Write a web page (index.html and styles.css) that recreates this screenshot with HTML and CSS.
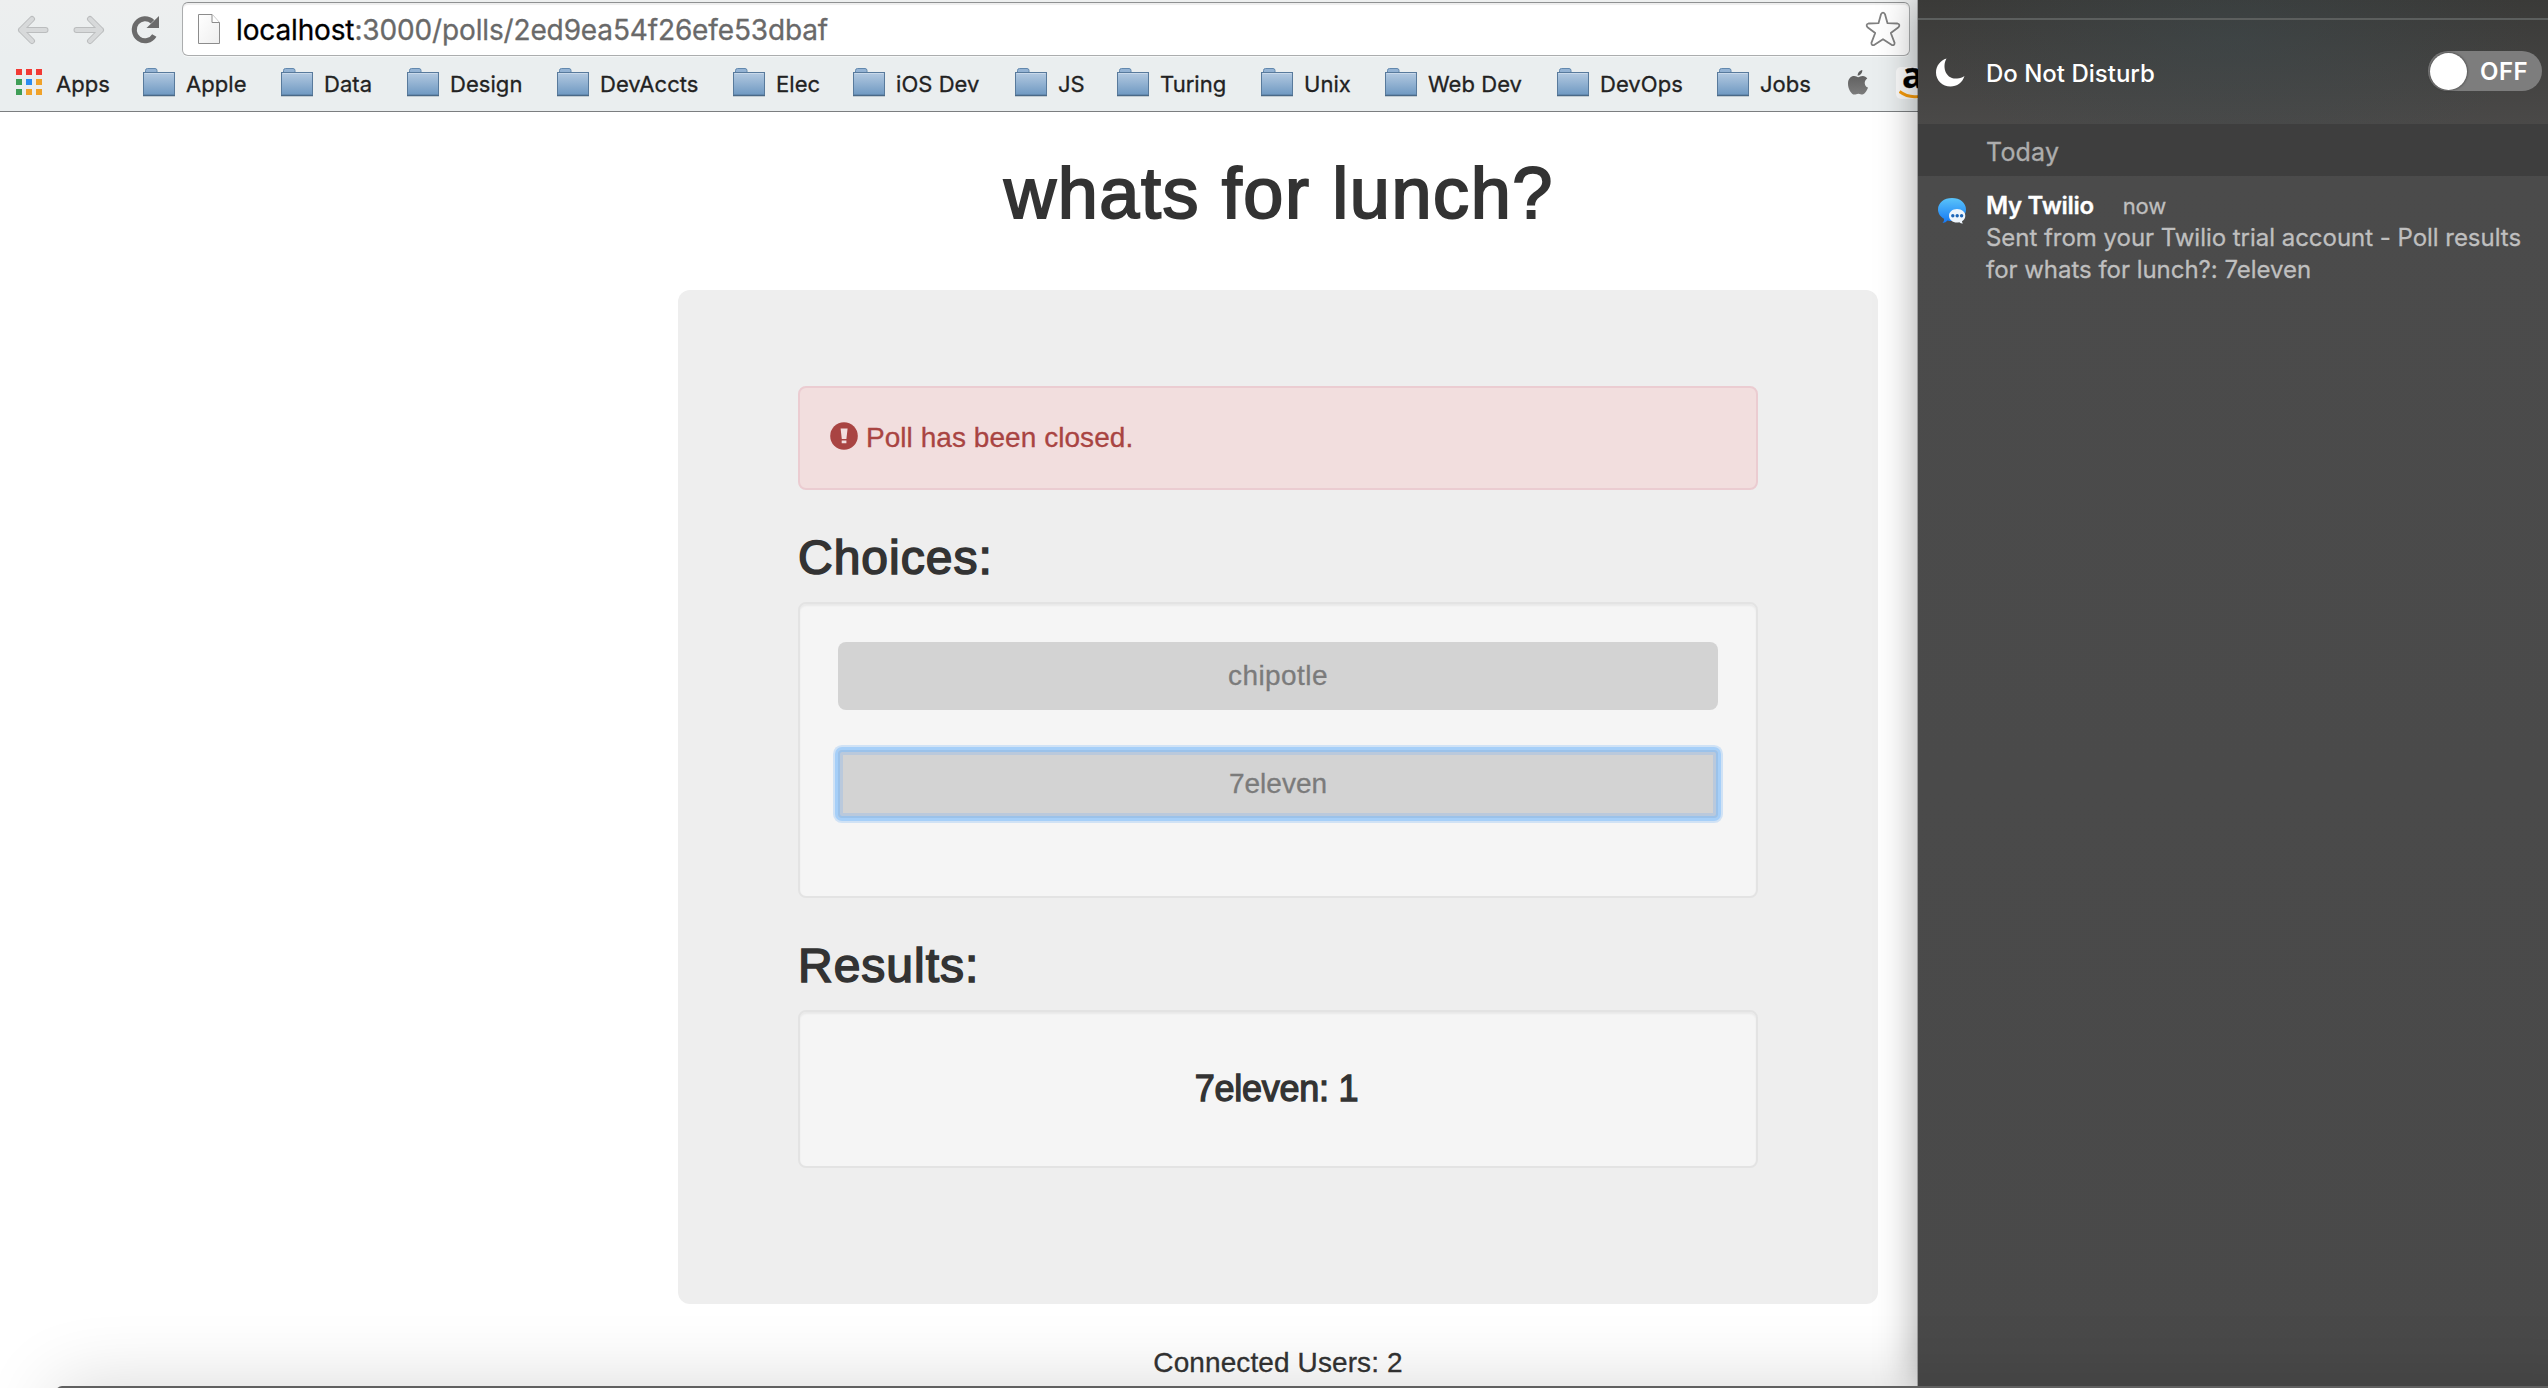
FILE: index.html
```
<!DOCTYPE html>
<html lang="en">
<head>
<meta charset="utf-8">
<title>whats for lunch?</title>
<link rel="stylesheet" href="styles.css">
</head>
<body>
<svg class="defs" width="0" height="0">
  <defs>
    <linearGradient id="folderFill" x1="0" y1="0" x2="0" y2="1"><stop offset="0" stop-color="#b4cae1"/><stop offset="1" stop-color="#6f99c2"/></linearGradient>
    <linearGradient id="pageFill" x1="0" y1="0" x2="1" y2="1"><stop offset="0" stop-color="#fff"/><stop offset="1" stop-color="#eee"/></linearGradient>
    <linearGradient id="bubbleFill" x1="0" y1="0" x2="0" y2="1"><stop offset="0" stop-color="#5ac4fa"/><stop offset="1" stop-color="#1478f5"/></linearGradient>
    <linearGradient id="appleFill" x1="0" y1="0" x2="0" y2="1"><stop offset="0" stop-color="#585858"/><stop offset="1" stop-color="#7c7c7c"/></linearGradient>
    <symbol id="folder" viewBox="0 0 32 29">
      <path d="M2.500 6V2.500Q2.500.5 4.500.5H12Q14 .5 14 2.500V6Z" fill="#94b3d4" stroke="#6288ae"/>
      <rect x=".5" y="4.500" width="31" height="22.500" fill="url(#folderFill)" stroke="#587a9c"/>
      <path d="M1.500 5.500H30.500" stroke="#c9d9ea"/>
      <path d="M0 27.500H32" stroke="#4a6987" stroke-width="1"/>
      <path d="M0 28.500H32" stroke="#c2cbd1"/>
    </symbol>
  </defs>
</svg>
<div class="screen">
  <div class="browser">
    <div class="toolbar">
      <svg class="nav" width="32" height="30" viewBox="0 0 32 30"><path d="M15 4 4 15 15 26M4 15H28.500" fill="none" stroke="#bbbdbe" stroke-width="6" stroke-linecap="round" stroke-linejoin="round"/><path d="M15 4 4 15 15 26M4 15H28.500" fill="none" stroke="#d7d9da" stroke-width="4" stroke-linecap="round" stroke-linejoin="round"/></svg>
      <svg class="nav forward" width="32" height="30" viewBox="0 0 32 30"><path d="M17 4 28 15 17 26M28 15H3.500" fill="none" stroke="#bbbdbe" stroke-width="6" stroke-linecap="round" stroke-linejoin="round"/><path d="M17 4 28 15 17 26M28 15H3.500" fill="none" stroke="#d7d9da" stroke-width="4" stroke-linecap="round" stroke-linejoin="round"/></svg>
      <svg class="nav reload" width="30" height="30" viewBox="0 0 30 30"><path d="M23.300 20.500A10.800 11 0 1 1 21.500 6.800" fill="none" stroke="#6b6b6b" stroke-width="5"/><path d="M28 1V13H15.500Z" fill="#6b6b6b"/></svg>
      <div class="address">
        <svg width="24" height="32" viewBox="0 0 24 32"><path d="M1.500 1.500H15L22.500 9.500V30.500H1.500Z" fill="url(#pageFill)" stroke="#8c8c8c"/><path d="M15 1.500V9.500H22.500" fill="#fff" stroke="#8c8c8c"/></svg>
        <span class="url"><b>localhost</b>:3000/polls/2ed9ea54f26efe53dbaf</span>
        <svg class="star" width="36" height="36" viewBox="0 0 36 36"><path d="M16 3.200Q18 .2 20 3.200L22.500 12.200 32.500 12.500Q35.600 13.500 33.500 16.200L25.800 22 29.600 31.800Q29.600 35 26.500 33.800L18 28.200 9.500 33.800Q6.400 35 6.400 31.800L10.200 22 2.500 16.200Q.4 13.500 3.500 12.500L13.500 12.200Z" fill="#fff" stroke="#808080" stroke-width="1.800" stroke-linejoin="round"/></svg>
      </div>
    </div>
    <nav class="bookmarks">
      <svg class="apps" width="26" height="26" viewBox="0 0 26 26"><path fill="#f23a34" d="M0 0h6v6H0zM10 0h6v6h-6zM20 0h6v6h-6z"/><path fill="#3f9e57" d="M0 10h6v6H0zM0 20h6v6H0z"/><path fill="#2a8cf0" d="M10 10h6v6h-6z"/><path fill="#f0a22a" d="M20 10h6v6h-6zM10 20h6v6h-6zM20 20h6v6h-6z"/></svg>
      <span>Apps</span>
      <svg class="folder"><use href="#folder"/></svg><span>Apple</span>
      <svg class="folder"><use href="#folder"/></svg><span>Data</span>
      <svg class="folder"><use href="#folder"/></svg><span>Design</span>
      <svg class="folder"><use href="#folder"/></svg><span>DevAccts</span>
      <svg class="folder"><use href="#folder"/></svg><span>Elec</span>
      <svg class="folder"><use href="#folder"/></svg><span>iOS Dev</span>
      <svg class="folder"><use href="#folder"/></svg><span>JS</span>
      <svg class="folder"><use href="#folder"/></svg><span>Turing</span>
      <svg class="folder"><use href="#folder"/></svg><span>Unix</span>
      <svg class="folder"><use href="#folder"/></svg><span>Web Dev</span>
      <svg class="folder"><use href="#folder"/></svg><span>DevOps</span>
      <svg class="folder"><use href="#folder"/></svg><span>Jobs</span>
      <svg class="apple" width="20" height="25" viewBox="0 0 20 25"><path fill="url(#appleFill)" d="M14.300 0C14.500 3.200 12 5.700 9.700 5.700 9.400 3 11.800.4 14.300 0ZM10.200 7.200C11.300 7.200 12.600 6 14.800 6 16.600 6 18.300 6.900 19.300 8.400 15.500 10.600 16.100 16 20 17.600 19 20.500 16.700 24.600 14.400 24.600 12.900 24.600 12.300 23.700 10.400 23.700 8.500 23.700 7.800 24.600 6.400 24.600 3.500 24.600 0 19 0 13.700 0 8.700 3 6.100 6.100 6.100 8 6.100 9.300 7.200 10.200 7.200Z"/></svg>
      <div class="amazon"><span>a</span><svg width="36" height="9" viewBox="0 0 36 9"><path d="M.5 1.500Q13 11 30 3" fill="none" stroke="#f79b0b" stroke-width="3"/></svg></div>
    </nav>
    <main class="page">
      <h1>whats for lunch?</h1>
      <section class="jumbotron">
        <div class="alert">
          <svg width="28" height="28" viewBox="0 0 28 28"><circle cx="14" cy="14" r="13.800" fill="#a94442"/><path d="M10.600 6.500h7l-1.200 10.500h-4.600zM11.700 18.500h4.700v2.800h-4.700z" fill="#f2dede"/></svg>
          <span>Poll has been closed.</span>
        </div>
        <h2>Choices:</h2>
        <div class="well choices">
          <button class="choice" disabled>chipotle</button>
          <button class="choice focused" disabled>7eleven</button>
        </div>
        <h2>Results:</h2>
        <div class="well results">7eleven: 1</div>
      </section>
      <p class="connected">Connected Users: 2</p>
    </main>
  </div>
  <aside class="panel">
    <div class="top-rule"></div>
    <div class="dnd">
      <svg class="moon" width="29" height="29" viewBox="0 0 29 29"><path d="M10.500.5C6 8 9 21.500 21 20.500 24 20.300 26.500 19.500 28.500 18 26.500 24.500 21 28.500 14.500 28.500 6.500 28.500 0 22.500 0 14.500 0 8 4.500 2 10.500.5Z" fill="#fff"/></svg>
      <span class="dnd-label">Do Not Disturb</span>
      <div class="toggle"><i></i><span>OFF</span></div>
    </div>
    <div class="today">Today</div>
    <article class="note">
      <svg width="32" height="30" viewBox="0 0 32 30"><path d="M15 1C23 1 29 5.800 29 12.500S23 24 15 24Q12.500 24 10.500 23.400 9 25.500 5.500 26 7.500 24 7 21.800C3.500 19.800 1 16.500 1 12.500 1 5.800 7 1 15 1Z" fill="url(#bubbleFill)"/><path d="M20 12C25 12 28.300 15 28.300 18.700 28.300 21 27 23 25 24.200Q25 25.700 26 26.600 23.500 26.500 22.300 25.300 21 25.500 20 25.500C15.500 25.500 12 22.500 12 18.700S15.500 12 20 12Z" fill="#eef5fc"/><g fill="#1d66b8"><circle cx="15.800" cy="18.800" r="1.700"/><circle cx="20.200" cy="18.800" r="1.700"/><circle cx="24.600" cy="18.800" r="1.700"/></g></svg>
      <div class="note-text">
        <div class="note-head"><strong>My Twilio</strong><time>now</time></div>
        <p>Sent from your Twilio trial account - Poll results<br>for whats for lunch?: 7eleven</p>
      </div>
    </article>
  </aside>
  <div class="dock"></div>
</div>
</body>
</html>
```
FILE: styles.css
```
* { box-sizing: border-box; }
body { margin: 0; overflow: hidden; }
h1, h2, p { margin: 0; font-weight: 400; }
svg { display: block; flex: none; }
.defs { position: absolute; }

.screen {
  position: relative;
  display: flex;
  width: 2548px;
  height: 1388px;
  overflow: hidden;
  background: #fff;
}
.browser {
  width: 1918px;
  flex: none;
  overflow: hidden;
  font-family: "Liberation Sans", Arial, sans-serif;
  color: #333;
}

.toolbar {
  display: flex;
  height: 58px;
  padding: 2px 8px 2px 17px;
  background: linear-gradient(#edefef, #eaeeef);
}
.nav { margin-top: 13px; }
.forward { margin-left: 24px; }
.reload { margin-left: 26px; }
.address {
  display: flex;
  align-items: center;
  flex: 1;
  margin-left: 21px;
  padding: 0 8px 0 14px;
  border: 1px solid #abadae;
  border-top-color: #8f9192;
  border-radius: 6px;
  background: #fff;
  box-shadow: inset 0 2px 1px #eee, 0 1px 0 #f6f8f8;
}
.url {
  flex: 1;
  margin: 2px 0 0 15px;
  font: 28px/40px Inter, sans-serif;
  letter-spacing: -0.14px;
  -webkit-text-stroke: 0.3px;
  color: #696969;
}
.url b { font-weight: 400; color: #000; }

.bookmarks {
  display: grid;
  grid-template-columns:
    40px 87px 43px 95px 43px 83px 43px 107px 43px 133px 43px 77px 43px 119px
    43px 59px 43px 101px 43px 81px 43px 129px 43px 117px 43px 88px 48px 60px;
  align-items: center;
  height: 54px;
  padding-left: 16px;
  border-bottom: 1px solid #7b7e80;
  background: #eaeeef;
  font: 22px/28px Inter, sans-serif;
  letter-spacing: 0.05px;
  -webkit-text-stroke: 0.3px #222;
  color: #222;
}
.bookmarks > span { white-space: nowrap; margin-bottom: 1px; }
.bookmarks > .apps { margin-bottom: 5px; }
.folder { width: 32px; height: 29px; margin-bottom: 4px; }
.apple { margin-bottom: 4px; }
.amazon {
  width: 36px;
  height: 32px;
  margin-bottom: 4px;
  padding-left: 3px;
  border-radius: 5px;
  background: #fbfbfb;
}
.amazon span {
  display: block;
  height: 23px;
  padding-left: 3px;
  font: 700 35px/16px "Open Sans", sans-serif;
  color: #000;
}

.page { padding: 41px 38px 0 678px; }
h1 {
  margin-bottom: 57px;
  font-size: 72px;
  line-height: 80px;
  letter-spacing: 1.6px;
  text-align: center;
  -webkit-text-stroke: 2px #333;
}
.jumbotron {
  width: 1200px;
  height: 1014px;
  padding: 96px 120px;
  border-radius: 12px;
  background: #eee;
}
.alert {
  display: flex;
  align-items: center;
  gap: 8px;
  height: 104px;
  padding-left: 30px;
  border: 2px solid #ebccd1;
  border-radius: 8px;
  background: #f2dede;
  font-size: 28px;
  line-height: 40px;
  letter-spacing: 0.05px;
  -webkit-text-stroke: 0.3px;
  color: #a94442;
}
.alert svg { margin-bottom: 4px; }
h2 {
  margin: 40px 0 16px;
  font-size: 48px;
  line-height: 56px;
  letter-spacing: 1px;
  -webkit-text-stroke: 1.6px #333;
}
.well {
  border: 2px solid #e3e3e3;
  border-radius: 8px;
  background: #f5f5f5;
  box-shadow: inset 0 2px 2px rgba(0, 0, 0, 0.05);
}
.choices {
  display: flex;
  flex-direction: column;
  gap: 40px;
  height: 296px;
  padding: 38px;
}
.choice {
  height: 68px;
  padding: 0;
  border: 0;
  border-radius: 8px;
  background: #d3d3d3;
  font: 28px/68px "Liberation Sans", Arial, sans-serif;
  letter-spacing: 0.45px;
  -webkit-text-stroke: 0.3px;
  color: #7b7b7b;
}
.focused {
  letter-spacing: 0;
  border-radius: 4px;
  box-shadow:
    inset 0 0 0 2px #9bc2ea,
    inset 0 0 0 5px #bac9dc,
    0 0 0 3px #a6cff8,
    0 0 0 5px #d0e2f5;
}
.results {
  height: 158px;
  padding-right: 3px;
  font-size: 36px;
  line-height: 154px;
  letter-spacing: -0.25px;
  text-align: center;
  -webkit-text-stroke: 1.3px #333;
}
.connected {
  width: 1200px;
  margin-top: 39px;
  font-size: 28px;
  line-height: 40px;
  letter-spacing: 0.1px;
  text-align: center;
  -webkit-text-stroke: 0.3px;
}

.panel {
  position: relative;
  flex: 1;
  background:
    radial-gradient(ellipse 300px 130px at 50% 40px, rgba(60, 75, 80, 0.4), transparent),
    linear-gradient(#3a3a38, #4a4948 124px, #4b4b4b 180px, #494949);
  box-shadow: -1px 0 0 rgba(0, 0, 0, 0.25), 0 0 38px rgba(0, 0, 0, 0.38);
  font-family: Inter, sans-serif;
  color: #fff;
}
.top-rule { height: 20px; border-bottom: 2px solid #5c5f5e; }
.dnd {
  display: flex;
  align-items: center;
  height: 104px;
  padding: 0 6px 0 18px;
}
.dnd-label {
  flex: 1;
  margin: 3px 0 0 21px;
  font-size: 24px;
  font-weight: 500;
}
.toggle {
  display: flex;
  align-items: center;
  width: 114px;
  height: 40px;
  margin-bottom: 2px;
  padding-left: 2px;
  border-radius: 20px;
  background: #7d7d7d;
  font-size: 24px;
  font-weight: 600;
  letter-spacing: 0.5px;
}
.toggle i {
  width: 37px;
  height: 37px;
  margin-right: 13px;
  border-radius: 50%;
  background: #fff;
  box-shadow: 0 0 3px rgba(0, 0, 0, 0.6);
}
.today {
  height: 52px;
  padding: 4px 0 0 68px;
  background: #3e3e3e;
  font-size: 25px;
  line-height: 48px;
  letter-spacing: 0.2px;
  -webkit-text-stroke: 0.3px;
  color: #adadad;
}
.note { display: flex; padding: 14px 0 0 19px; }
.note svg { margin: 7px 17px 0 0; }
.note-text {
  font-size: 24px;
  line-height: 32px;
  letter-spacing: -0.03px;
  -webkit-text-stroke: 0.3px;
  color: #bfbfbf;
}
.note-head { display: flex; gap: 29px; }
.note-head strong {
  font-weight: 600;
  letter-spacing: -0.3px;
  color: #fff;
}
.note-head time { font-size: 22px; letter-spacing: -0.2px; }

.dock {
  position: absolute;
  left: 56px;
  right: -60px;
  bottom: -98px;
  height: 100px;
  border-radius: 6px;
  background: #606060;
  box-shadow: 0 0 75px rgba(0, 0, 0, 0.16);
}
```
